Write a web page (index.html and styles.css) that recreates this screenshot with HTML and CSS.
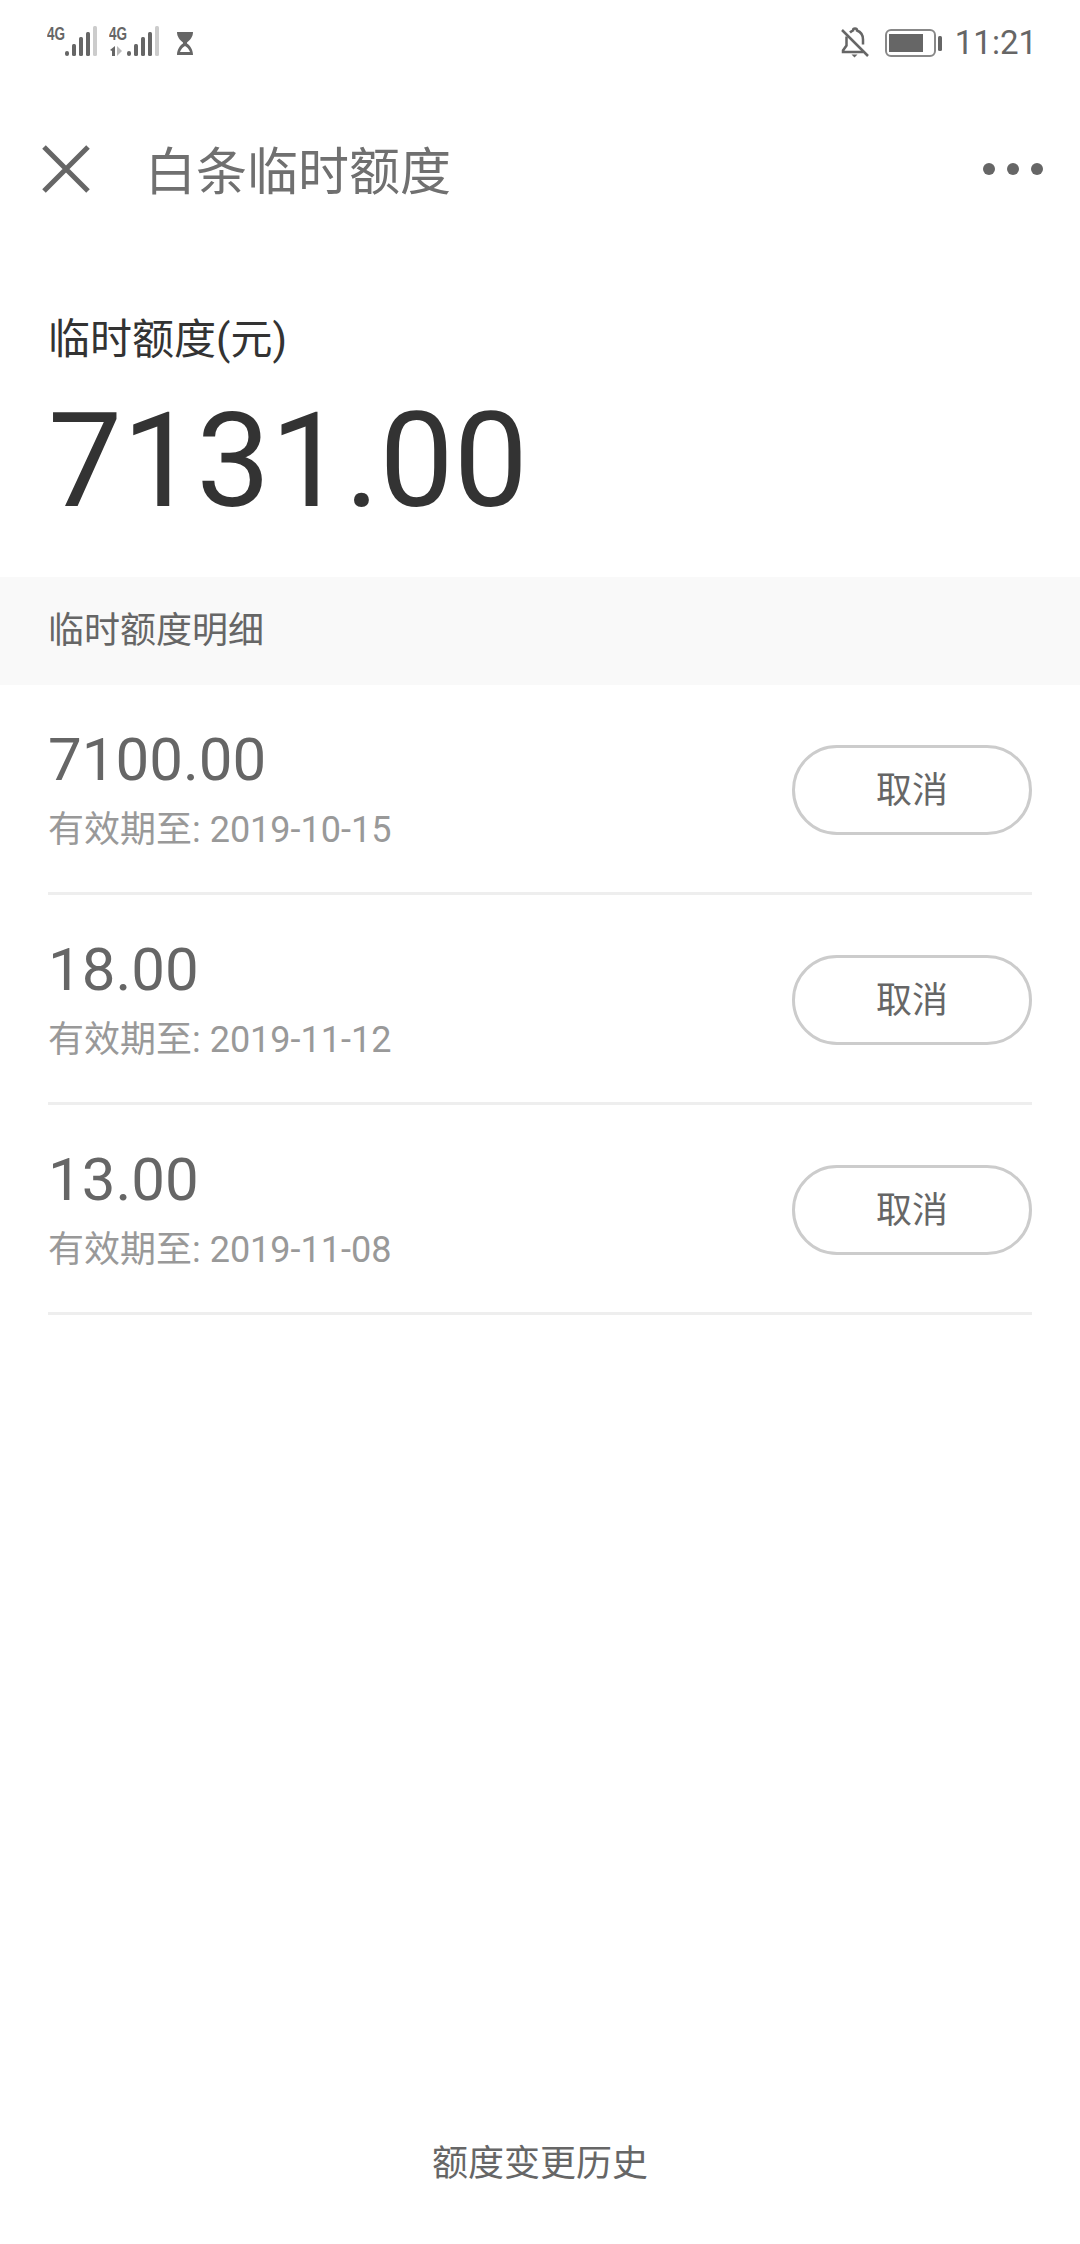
FILE: index.html
```html
<!DOCTYPE html>
<html lang="zh-CN">

<head>
    <meta charset="UTF-8">
    <meta name="viewport" content="width=device-width, initial-scale=1.0">
    <link rel="stylesheet" href="styles.css">
    <title>白条临时额度</title>
</head>

<body>
    <div class="page">
        <div class="status-bar">
            <div class="status-left">
                <svg class="signal" width="52" height="40" viewBox="0 -6 52 40">
                    <text x="0" y="14" class="net-label" textLength="18" lengthAdjust="spacingAndGlyphs">4G</text>
                    <rect x="18" y="25" width="4" height="5" rx="2" fill="#666"/>
                    <rect x="25" y="18" width="4" height="12" rx="1.5" fill="#666"/>
                    <rect x="32" y="11" width="4" height="19" rx="1.5" fill="#666"/>
                    <rect x="39" y="6" width="4" height="24" rx="1.5" fill="#666"/>
                    <rect x="46" y="0" width="4" height="30" rx="1.5" fill="#ccc"/>
                </svg>
                <svg class="signal" width="52" height="40" viewBox="0 -6 52 40">
                    <text x="0" y="14" class="net-label" textLength="18" lengthAdjust="spacingAndGlyphs">4G</text>
                    <path d="M1 24l5-4v10h-3v-5z" fill="#666"/>
                    <path d="M8 20l5 5-5 5z" fill="#bbb"/>
                    <rect x="18" y="25" width="4" height="5" rx="2" fill="#666"/>
                    <rect x="25" y="18" width="4" height="12" rx="1.5" fill="#666"/>
                    <rect x="32" y="11" width="4" height="19" rx="1.5" fill="#666"/>
                    <rect x="39" y="6" width="4" height="24" rx="1.5" fill="#666"/>
                    <rect x="46" y="0" width="4" height="30" rx="1.5" fill="#ccc"/>
                </svg>
                <svg class="hourglass" width="18" height="23" viewBox="0 0 18 23">
                    <path d="M1 0h16c0 5-3 8-6 10.500v1c3 2 6 6 6 11.500h-16c0-5.500 3-9.500 6-11.500v-1c-3-2.500-6-5.500-6-10.500z" fill="#666"/>
                    <path d="M4 20c1-3 3-5 5-6 2 1 4 3 5 6z" fill="#fff"/>
                </svg>
            </div>
            <div class="status-right">
                <svg class="bell" width="28" height="32" viewBox="0 0 28 32">
                    <path d="M9 5.500c1-1 2-1.500 3-2 0-1.500 1-2 2-2s2 .5 2 2c4 1.500 6 5 6 9v5" fill="none" stroke="#666" stroke-width="2.500"/>
                    <path d="M5.500 9.500v9l-3.500 5v1.500h20" fill="none" stroke="#666" stroke-width="2.500"/>
                    <path d="M10.500 27.500h6l-3 3z" fill="#666"/>
                    <path d="M1 3l26 26" stroke="#666" stroke-width="2.500"/>
                </svg>
                <svg class="battery" width="58" height="28" viewBox="0 0 58 28">
                    <rect x="1" y="1" width="49" height="26" rx="5" fill="none" stroke="#888" stroke-width="2"/>
                    <rect x="4" y="5" width="34" height="18" fill="#666"/>
                    <rect x="53" y="7" width="4" height="15" rx="1.500" fill="#666"/>
                </svg>
                <span class="time">11:21</span>
            </div>
        </div>

        <div class="nav-bar">
            <svg class="close-icon" width="48" height="48" viewBox="0 0 48 48">
                <path d="M2 2l44 44M46 2l-44 44" stroke="#666" stroke-width="5"/>
            </svg>
            <h1 class="nav-title">白条临时额度</h1>
            <div class="more-dots">
                <span class="dot"></span>
                <span class="dot"></span>
                <span class="dot"></span>
            </div>
        </div>

        <div class="summary">
            <div class="summary-label">临时额度(元)</div>
            <div class="summary-amount">7131.00</div>
        </div>

        <div class="section-title">临时额度明细</div>

        <div class="quota-list">
            <div class="quota-row">
                <div>
                    <div class="quota-amount">7100.00</div>
                    <div class="quota-date">有效期至: 2019-10-15</div>
                </div>
                <div class="cancel-btn">取消</div>
            </div>
            <div class="quota-row">
                <div>
                    <div class="quota-amount">18.00</div>
                    <div class="quota-date">有效期至: 2019-11-12</div>
                </div>
                <div class="cancel-btn">取消</div>
            </div>
            <div class="quota-row">
                <div>
                    <div class="quota-amount">13.00</div>
                    <div class="quota-date">有效期至: 2019-11-08</div>
                </div>
                <div class="cancel-btn">取消</div>
            </div>
        </div>

        <div class="history-link">额度变更历史</div>
    </div>
</body>

</html>
```

FILE: styles.css
```css
body {
  margin: 0;
  background: #ffffff;
}

.page {
  display: flex;
  flex-direction: column;
  height: 2244px;
  font-family: Roboto, "Noto Sans CJK SC", sans-serif;
  color: #666666;
}

.status-bar {
  display: flex;
  justify-content: space-between;
  align-items: center;
  height: 86px;
  padding: 0 43px 0 47px;
}

.status-left,
.status-right {
  display: flex;
  align-items: center;
}

.status-left .signal {
  margin-right: 10px;
  margin-bottom: 6px;
}

.status-left .hourglass {
  margin-left: 5px;
}

.net-label {
  font-family: "Liberation Sans", sans-serif;
  font-size: 18px;
  font-weight: 700;
  fill: #666666;
}

.bell {
  margin-right: 16px;
}

.battery {
  margin-right: 12px;
}

.time {
  font-size: 33px;
  line-height: 40px;
}

.nav-bar {
  display: flex;
  align-items: center;
  box-sizing: border-box;
  height: 170px;
  padding: 0 37px 4px 42px;
}

.nav-title {
  flex: 1;
  margin: 0 0 2px 55px;
  font-size: 51px;
  font-weight: 400;
  color: #707070;
}

.more-dots {
  display: flex;
  gap: 12px;
}

.dot {
  width: 12px;
  height: 12px;
  border-radius: 50%;
  background: #666666;
}

.summary {
  height: 321px;
  padding: 54px 48px 0;
  box-sizing: border-box;
  color: #333333;
}

.summary-label {
  font-size: 42px;
  line-height: 60px;
}

.summary-amount {
  margin-top: 16px;
  font-size: 132px;
  line-height: 150px;
}

.section-title {
  height: 108px;
  padding: 0 48px;
  background: #f9f9f9;
  font-size: 36px;
  line-height: 108px;
}

.quota-list {
  padding: 0 48px;
}

.quota-row {
  display: flex;
  justify-content: space-between;
  align-items: center;
  box-sizing: border-box;
  height: 210px;
  padding-top: 3px;
  border-bottom: 3px solid #eeeeee;
}

.quota-amount {
  font-size: 60px;
  line-height: 70px;
}

.quota-date {
  margin-top: 10px;
  font-size: 36px;
  line-height: 50px;
  color: #999999;
}

.cancel-btn {
  box-sizing: border-box;
  width: 240px;
  height: 90px;
  border: 3px solid #cccccc;
  border-radius: 45px;
  font-size: 36px;
  line-height: 86px;
  text-align: center;
}

.history-link {
  margin-top: auto;
  padding-bottom: 50px;
  font-size: 36px;
  line-height: 60px;
  text-align: center;
}
```
